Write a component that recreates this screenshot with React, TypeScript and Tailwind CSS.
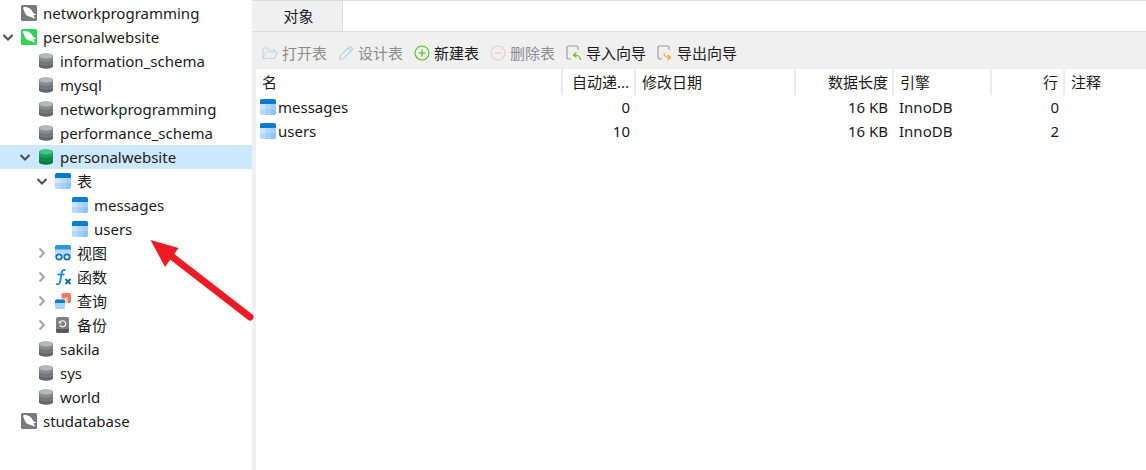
import { ReactNode } from 'react';

const font = 'font-["Noto_Sans","Noto_Sans_CJK_SC",sans-serif]';

function Chevron({ open }: { open: boolean }) {
  return (
    <svg width="16" height="16" viewBox="0 0 16 16" fill="none" stroke={open ? '#4d4d4d' : '#a6a6a6'} strokeWidth="2">
      {open ? <path d="M3.5 6 8 10.5 12.5 6" /> : <path d="M5.5 3.5 10 8l-4.500 4.500" />}
    </svg>
  );
}

function Dolphin({ color }: { color: string }) {
  return (
    <svg width="16" height="16" viewBox="0 0 16 16">
      <rect width="16" height="16" rx="1.500" fill={color} />
      <path
        d="M2 2.500C5 1.500 8 2.500 10 4.500c1 1 1.500 2.500 2.500 3.500.5.500 1.500 1 2.500 1.200-.7.800-1.600 1-2.400.8.600 1 1 2.300 1.200 4-1.200-1.100-2.800-1.800-4.300-2-3-.5-5.700-2.500-6.100-5.500C2.800 5.500 2.300 4 2 2.500z"
        fill="#fff"
      />
    </svg>
  );
}

function Database({ green }: { green?: boolean }) {
  const c = green ? ['#3ec97c', '#16a35c', '#0e8a4c', '#0a7a42'] : ['#b4b7bb', '#868b91', '#73787e', '#62676d'];
  return (
    <svg width="16" height="16" viewBox="0 0 16 16">
      <path d="M1 3c0-1.600 3-2.500 7-2.500s7 .9 7 2.500v10c0 1.600-3 2.500-7 2.500S1 14.600 1 13z" fill={c[1]} />
      <ellipse cx="8" cy="3" rx="7" ry="2.500" fill={c[0]} />
      <path d="M1 6.500c1 1.400 3.500 2 7 2s6-.6 7-2V10c-1 1.400-3.500 2-7 2s-6-.6-7-2z" fill={c[2]} />
      <path d="M1 10.500c1 1.300 3.500 2 7 2s6-.7 7-2V13c0 1.600-3 2.500-7 2.500S1 14.600 1 13z" fill={c[3]} />
    </svg>
  );
}

function TableIcon() {
  return (
    <svg width="16" height="16" viewBox="0 0 16 16">
      <rect width="16" height="16" rx="2" fill="#b6d9fb" />
      <path d="M0 5V2a2 2 0 0 1 2-2h12a2 2 0 0 1 2 2v3z" fill="#0b78d2" />
      <path d="M11 5h5v5h-5zM5.500 10H11v6H5.500z" fill="#a3cff8" />
      <path d="M0 5h5.500v5H0z" fill="#cce4fc" />
      <path d="M11 10h5v4a2 2 0 0 1-2 2h-3z" fill="#8fc4f6" />
    </svg>
  );
}

function ViewIcon() {
  return (
    <svg width="16" height="16" viewBox="0 0 16 16" fill="none">
      <rect y="0" width="16" height="13" rx="2" fill="#b9dafa" />
      <path d="M0 4.500V2a2 2 0 0 1 2-2h12a2 2 0 0 1 2 2v2.500z" fill="#2f92e2" />
      <circle cx="4" cy="12" r="2.700" fill="#fff" stroke="#0b6fc4" strokeWidth="1.800" />
      <circle cx="12" cy="12" r="2.700" fill="#fff" stroke="#0b6fc4" strokeWidth="1.800" />
    </svg>
  );
}

function FxIcon() {
  return (
    <svg width="16" height="16" viewBox="0 0 16 16" fill="none" stroke="#1a88e0" strokeWidth="1.800">
      <path d="M10.500 1.200C8 .5 7 1.800 6.600 4L5.200 12.500c-.4 2.200-1.500 3.200-4 2.600" />
      <path d="M2.500 5.500h7" />
      <path d="M10.500 10l5 5M15.500 10l-5 5" stroke="#0b6fc4" strokeWidth="2" />
    </svg>
  );
}

function QueryIcon() {
  return (
    <svg width="16" height="16" viewBox="0 0 16 16">
      <rect x="6.500" y="0" width="9.500" height="10" rx="1.500" fill="#f2795a" />
      <path d="M10 4h3v6h-3z" fill="#f8b9a6" />
      <rect x="-.5" y="5.500" width="11" height="11" rx="1.500" fill="#fff" />
      <rect x="0" y="6.500" width="10" height="9.500" rx="1.500" fill="#a9d2f8" />
      <path d="M0 10V8a1.500 1.500 0 0 1 1.500-1.500h7A1.500 1.500 0 0 1 10 8v2z" fill="#0b78d2" />
    </svg>
  );
}

function BackupIcon() {
  return (
    <svg width="16" height="16" viewBox="0 0 16 16" fill="none">
      <rect x="1" y="0" width="13" height="16" rx="2" fill="#7b7f84" />
      <path d="M1 12h13v2a2 2 0 0 1-2 2H3a2 2 0 0 1-2-2z" fill="#55595e" />
      <path d="M5.200 5.200A3 3 0 1 1 5 8" stroke="#fff" strokeWidth="1.100" />
      <path d="M4.300 3.800v2.200h2.200" stroke="#fff" strokeWidth="1" />
    </svg>
  );
}

type Node = {
  depth: number;
  label: string;
  icon: ReactNode;
  open?: boolean;
  selected?: boolean;
};

const tree: Node[] = [
  { depth: 0, label: 'networkprogramming', icon: <Dolphin color="#77797c" /> },
  { depth: 0, label: 'personalwebsite', icon: <Dolphin color="#34d15c" />, open: true },
  { depth: 1, label: 'information_schema', icon: <Database /> },
  { depth: 1, label: 'mysql', icon: <Database /> },
  { depth: 1, label: 'networkprogramming', icon: <Database /> },
  { depth: 1, label: 'performance_schema', icon: <Database /> },
  { depth: 1, label: 'personalwebsite', icon: <Database green />, open: true, selected: true },
  { depth: 2, label: '表', icon: <TableIcon />, open: true },
  { depth: 3, label: 'messages', icon: <TableIcon /> },
  { depth: 3, label: 'users', icon: <TableIcon /> },
  { depth: 2, label: '视图', icon: <ViewIcon />, open: false },
  { depth: 2, label: '函数', icon: <FxIcon />, open: false },
  { depth: 2, label: '查询', icon: <QueryIcon />, open: false },
  { depth: 2, label: '备份', icon: <BackupIcon />, open: false },
  { depth: 1, label: 'sakila', icon: <Database /> },
  { depth: 1, label: 'sys', icon: <Database /> },
  { depth: 1, label: 'world', icon: <Database /> },
  { depth: 0, label: 'studatabase', icon: <Dolphin color="#77797c" /> },
];

const indent = ['pl-0', 'pl-[17px]', 'pl-[34px]', 'pl-[51px]'];

function TreeRow({ node }: { node: Node }) {
  return (
    <div className={`flex h-6 items-center ${indent[node.depth]} ${node.selected ? 'bg-[#cce8ff]' : ''}`}>
      <span className="flex w-[21px] shrink-0">{node.open !== undefined && <Chevron open={node.open} />}</span>
      <span className="flex w-[22px] shrink-0">{node.icon}</span>
      <span className="whitespace-nowrap">{node.label}</span>
    </div>
  );
}

function FolderIcon() {
  return (
    <svg width="16" height="16" viewBox="0 0 16 16" fill="none" stroke="#c3d3e0" strokeWidth="1.100">
      <path d="M1 13.500V3h4.500l1.500 2h6v2" />
      <path d="M1 13.500h11.500L15.500 7H4z" />
    </svg>
  );
}

function PencilIcon() {
  return (
    <svg width="16" height="16" viewBox="0 0 16 16" fill="none" stroke="#bdd2e4" strokeWidth="1.200">
      <path d="M1.500 14.500l1-4L11 2a1.500 1.500 0 0 1 2 0l1 1a1.500 1.500 0 0 1 0 2l-8.500 8.500z" />
      <path d="M10 3l3 3" />
    </svg>
  );
}

function CircleIcon({ color, plus }: { color: string; plus?: boolean }) {
  return (
    <svg width="16" height="16" viewBox="0 0 16 16" fill="none" stroke={color} strokeWidth="1.200">
      <circle cx="8" cy="8" r="7" />
      <path d="M4.500 8h7" />
      {plus && <path d="M8 4.500v7" />}
    </svg>
  );
}

function WizardIcon({ color, out }: { color: string; out?: boolean }) {
  return (
    <svg width="16" height="16" viewBox="0 0 16 16" fill="none" stroke="#999999" strokeWidth="1.100">
      <path d="M5 14H2.500A1.500 1.500 0 0 1 1 12.500v-10A1.500 1.500 0 0 1 2.500 1h8A1.500 1.500 0 0 1 12 2.500V5" />
      {out ? (
        <path d="M7 8c0 3 1.500 4.500 5.500 4.500M10.500 10 13.500 12.500l-3 2.500" stroke={color} strokeWidth="1.200" />
      ) : (
        <path d="M14.500 15c0-3.500-2-5-6.500-5M10.500 7.500 7.500 10l3 2.500" stroke={color} strokeWidth="1.200" />
      )}
    </svg>
  );
}

const tools = [
  { label: '打开表', icon: <FolderIcon />, off: true },
  { label: '设计表', icon: <PencilIcon />, off: true },
  { label: '新建表', icon: <CircleIcon color="#4cc417" plus /> },
  { label: '删除表', icon: <CircleIcon color="#e8cdc8" />, off: true },
  { label: '导入向导', icon: <WizardIcon color="#5cc21a" /> },
  { label: '导出向导', icon: <WizardIcon color="#f5a623" out /> },
];

const columns = [
  { label: '名', width: 'w-[307px]', align: 'pl-[6px]' },
  { label: '自动递...', width: 'w-[73px]', align: 'justify-end pr-[5px]' },
  { label: '修改日期', width: 'w-[160px]', align: 'pl-[6px]' },
  { label: '数据长度', width: 'w-[98px]', align: 'justify-end pr-[4px]' },
  { label: '引擎', width: 'w-[98px]', align: 'pl-[6px]' },
  { label: '行', width: 'w-[73px]', align: 'justify-end pr-[5px]' },
  { label: '注释', width: 'flex-1', align: 'pl-[6px]' },
];

const rows = [
  { name: 'messages', auto: '0', size: '16 KB', engine: 'InnoDB', count: '0' },
  { name: 'users', auto: '10', size: '16 KB', engine: 'InnoDB', count: '2' },
];

function ObjectRow({ row }: { row: (typeof rows)[number] }) {
  return (
    <div className="flex h-6 items-center">
      <div className="flex w-[306px] items-center gap-[2px] pl-[4px]">
        <TableIcon />
        <span>{row.name}</span>
      </div>
      <div className="w-[73px] pr-[5px] text-right">{row.auto}</div>
      <div className="w-[160px]" />
      <div className="w-[98px] pr-[5px] text-right">{row.size}</div>
      <div className="w-[98px] pl-[6px]">{row.engine}</div>
      <div className="w-[73px] pr-[5px] text-right">{row.count}</div>
    </div>
  );
}

export default function App() {
  return (
    <div className={`${font} relative flex h-[470px] w-[1146px] overflow-hidden bg-white text-[15px] text-[#1a1a1a]`}>
      <aside className="w-[252px] shrink-0 pt-px">
        {tree.map((node, i) => (
          <TreeRow key={i} node={node} />
        ))}
      </aside>

      <main className="flex min-w-0 flex-1 flex-col bg-[#f0f0f0] pl-[4px]">
        <div className="-ml-[4px] flex h-8 border-t border-b border-[#dcdcdc] bg-white">
          <div className="flex w-[91px] items-center justify-center border-r border-[#dcdcdc] bg-[#f0f0f0] pl-[3px]">对象</div>
        </div>

        <div className="flex h-[37px] items-center gap-[11px] pl-[6px] pt-[5px]">
          {tools.map((tool) => (
            <div key={tool.label} className={`flex items-center gap-1 ${tool.off ? 'text-[#8c8c8c]' : ''}`}>
              {tool.icon}
              <span className="whitespace-nowrap">{tool.label}</span>
            </div>
          ))}
        </div>

        <div className="flex-1 bg-white">
          <div className="flex h-[26px]">
            {columns.map((col) => (
              <div
                key={col.label}
                className={`flex items-center whitespace-nowrap border-r-2 border-[#ececec] last:border-r-0 ${col.width} ${col.align}`}
              >
                {col.label}
              </div>
            ))}
          </div>
          {rows.map((row) => (
            <ObjectRow key={row.name} row={row} />
          ))}
        </div>
      </main>

      {/* red annotation arrow drawn over the tree */}
      <svg className="absolute left-0 top-0" width="1146" height="470" fill="none">
        <path d="M166 252 250 317" stroke="#ed1c24" strokeWidth="7" strokeLinecap="round" />
        <path d="M150.500 240 178.500 248 165 267z" fill="#ed1c24" />
      </svg>
    </div>
  );
}
